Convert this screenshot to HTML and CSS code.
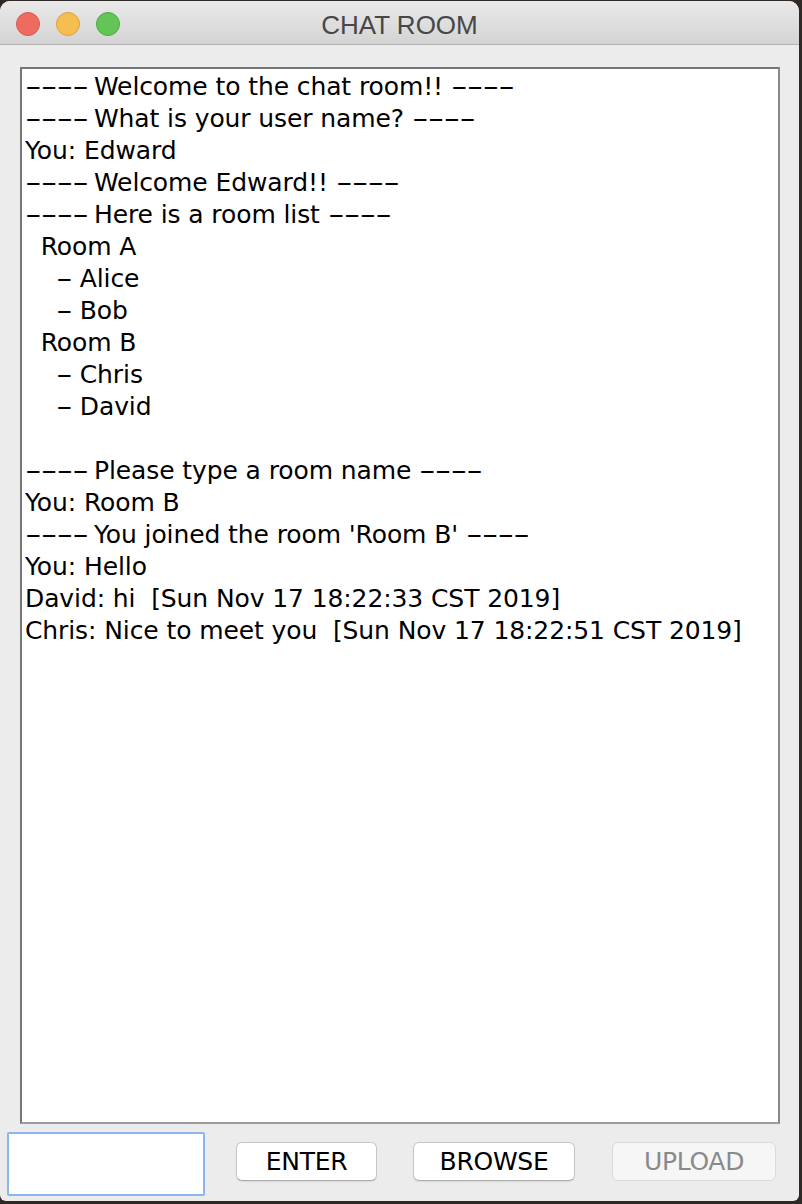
FILE: index.html
```html
<!DOCTYPE html>
<html>
<head>
<meta charset="utf-8">
<title>CHAT ROOM</title>
<link rel="stylesheet" href="styles.css">
</head>
<body>
<div class="window">
  <div class="titlebar">
    <div class="lights">
      <span class="light red"></span>
      <span class="light yellow"></span>
      <span class="light green"></span>
    </div>
    <div class="title">CHAT ROOM</div>
    <div class="spacer"></div>
  </div>
  <div class="main">
    <div class="log"><div class="line"><span class="dash four">----</span> Welcome to the chat room!! <span class="dash four">----</span></div><div class="line"><span class="dash four">----</span> What is your user name? <span class="dash four">----</span></div><div class="line">You: Edward</div><div class="line"><span class="dash four">----</span> Welcome Edward!! <span class="dash four">----</span></div><div class="line"><span class="dash four">----</span> Here is a room list <span class="dash four">----</span></div><div class="line">  Room A</div><div class="line">    <span class="dash one">-</span> Alice</div><div class="line">    <span class="dash one">-</span> Bob</div><div class="line">  Room B</div><div class="line">    <span class="dash one">-</span> Chris</div><div class="line">    <span class="dash one">-</span> David</div><div class="line"> </div><div class="line"><span class="dash four">----</span> Please type a room name <span class="dash four">----</span></div><div class="line">You: Room B</div><div class="line"><span class="dash four">----</span> You joined the room 'Room B' <span class="dash four">----</span></div><div class="line">You: Hello</div><div class="line">David: hi  [Sun Nov 17 18:22:33 CST 2019]</div><div class="line">Chris: Nice to meet you  [Sun Nov 17 18:22:51 CST 2019]</div></div>
    <div class="controls">
      <input class="entry" type="text">
      <button class="btn btn-enter">ENTER</button>
      <button class="btn btn-browse">BROWSE</button>
      <button class="btn btn-upload" disabled>UPLOAD</button>
    </div>
  </div>
</div>
</body>
</html>
```
FILE: styles.css
```css
html, body {
  margin: 0;
  padding: 0;
}
body {
  background: #2e2924;
  width: 802px;
  height: 1204px;
  overflow: hidden;
  font-family: "DejaVu Sans", sans-serif;
}
.window {
  margin-top: 1px;
  width: 799px;
  height: 1200px;
  background: #ececec;
  border-radius: 10px 10px 6px 6px;
  overflow: hidden;
  display: flex;
  flex-direction: column;
}
.titlebar {
  height: 43px;
  border-bottom: 1px solid #b3b3b3;
  background: linear-gradient(#e9e9e9, #d4d4d4);
  display: grid;
  grid-template-columns: 1fr auto 1fr;
  align-items: center;
}
.lights {
  display: flex;
  gap: 16px;
  padding-left: 16px;
  padding-top: 2px;
}
.light {
  width: 22px;
  height: 22px;
  border-radius: 50%;
  border: 1px solid;
}
.red { background: #ee6b60; border-color: #d65a4f; }
.yellow { background: #f6be50; border-color: #dca13d; }
.green { background: #62c555; border-color: #50a843; }
.title {
  font-family: "Liberation Sans", Arial, sans-serif;
  font-size: 26px;
  color: #474747;
  padding-top: 5px;
}
.main {
  flex: 1;
  display: flex;
  flex-direction: column;
}
.log {
  margin: 22px 19px 0 20px;
  height: 1051px;
  background: #fff;
  border: 2px solid #767676;
  border-bottom-color: #9c9c9c;
  border-right-color: #8a8a8a;
  padding: 2px 0 0 3px;
  font-size: 25px;
  line-height: 32px;
  color: #000;
  letter-spacing: -0.1px;
}
.line {
  white-space: pre;
  height: 32px;
}
.dash {
  display: inline-block;
  letter-spacing: -0.5px;
  transform: scaleX(1.85);
  transform-origin: left center;
}
.dash.four {
  margin-right: 27px;
}
.dash.one {
  margin-right: 7px;
}
.controls {
  display: flex;
  align-items: flex-start;
  padding: 8px 0 0 7px;
}
.entry {
  box-sizing: border-box;
  width: 198px;
  height: 64px;
  margin: 0;
  border: 2px solid #8ab6f0;
  border-radius: 2px;
  background: #fff;
  outline: none;
}
.btn {
  box-sizing: border-box;
  height: 39px;
  margin-top: 10px;
  padding: 0;
  background: #fff;
  border: 1px solid #c6c6c6;
  border-bottom-color: #adadad;
  border-radius: 6px;
  box-shadow: 0 1px 1px rgba(0, 0, 0, 0.08);
  font-family: "DejaVu Sans", sans-serif;
  font-size: 25px;
  letter-spacing: -0.3px;
  color: #000;
}
.btn-enter { width: 141px; margin-left: 31px; }
.btn-browse { width: 162px; margin-left: 36px; }
.btn-upload {
  width: 164px;
  margin-left: 37px;
  background: #f6f6f6;
  border-color: #dadada;
  color: #8a8a8a;
  box-shadow: none;
}
```
